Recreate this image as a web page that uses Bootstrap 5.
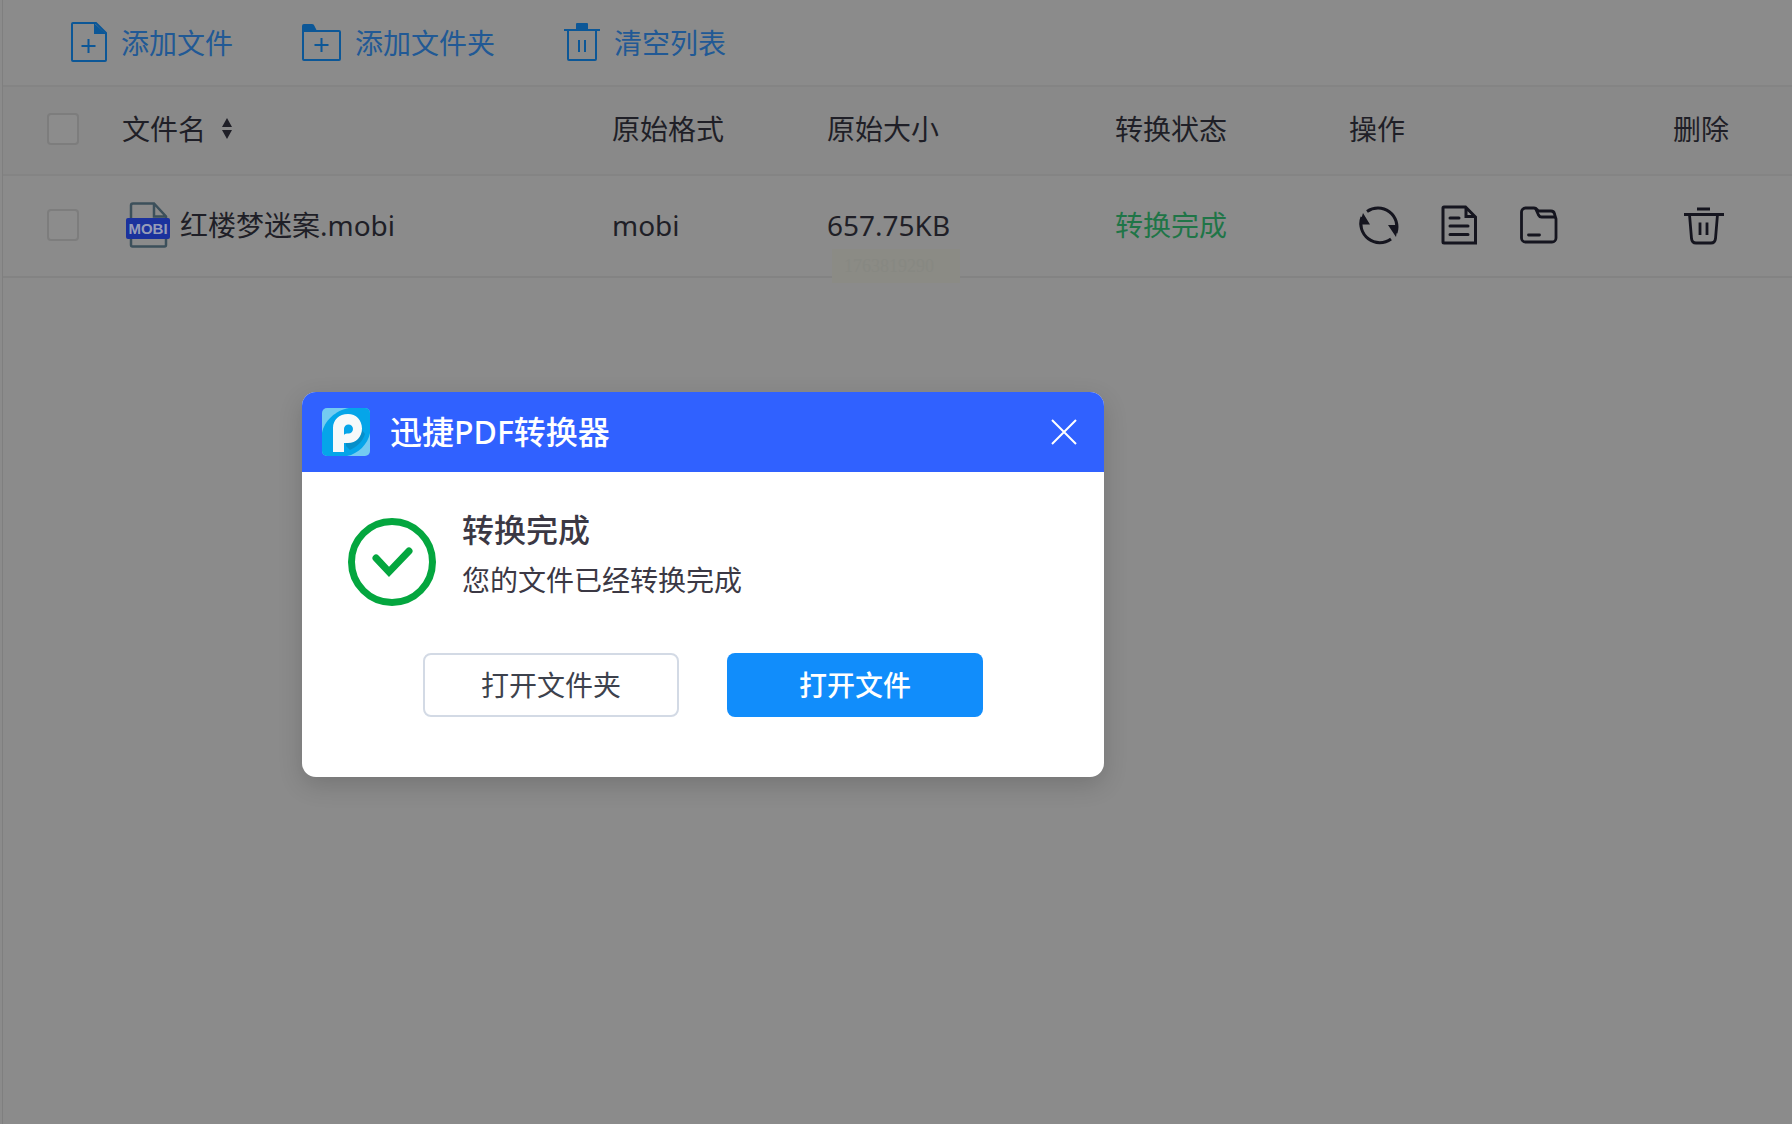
<!DOCTYPE html>
<html lang="zh-CN">
<head>
<meta charset="utf-8">
<meta name="viewport" content="width=device-width, initial-scale=1">
<title>迅捷PDF转换器</title>
<link href="https://cdn.jsdelivr.net/npm/bootstrap@5.3.0/dist/css/bootstrap.min.css" rel="stylesheet">
<style>
  body { background: #8b8b8b; color: #1f1f27; font-family: "Noto Sans", "Noto Sans CJK SC", sans-serif; font-size: 28px; line-height: 40px; }
  .workspace { margin-left: 2px; border-left: 1px solid #7f7f7f; }
  .toolbar { height: 87px; padding-left: 68px; column-gap: 69px; border-bottom: 2px solid #848484; }
  .plain { padding: 0; border: 0; background: none; color: #15151f; line-height: 0; }
  .tool { gap: 14px; color: #215995; }
  .tool svg { color: #0c5797; }
  .file-table { table-layout: fixed; width: 100%; }
  .file-table th { height: 88px; background: #898989; font-weight: 400; border-bottom: 2px solid #848484; }
  .file-table td { height: 102px; border-bottom: 2px solid #838383; }
  .file-table th, .file-table td { padding: 0 0 3px; vertical-align: middle; white-space: nowrap; }
  .file-table .form-check-input { display: block; width: 32px; height: 32px; margin: 0 0 0 44px; background-color: #8c8c8c; border: 2px solid #7d7d7d; border-radius: 4px; }
  .c-check, .c-del { width: 119px; }
  .c-format { width: 215px; }
  .c-size { width: 288px; }
  .c-status { width: 234px; }
  .c-ops { width: 324px; }
  .done { color: #1f7547; }
  .ops { gap: 38px; padding-left: 9px; }
  .size-tip { left: 5px; top: 73px; width: 128px; height: 34px; padding-left: 12px; background: #8b8b85; color: #878882; font-family: "Liberation Serif", serif; font-size: 18px; line-height: 34px; }
  .dialog { left: 302px; top: 392px; width: 802px; border-radius: 14px; background: #fff; color: #3b3844; box-shadow: 0 8px 24px rgba(0,0,0,.16); }
  .dialog-head { height: 80px; padding: 0 26px 0 20px; gap: 20px; background: #3061ff; color: #fff; font-size: 32px; font-weight: 500; }
  .dialog-body { padding: 36px 46px 60px; }
  .dialog-title { font-size: 32px; line-height: 44px; font-weight: 500; margin: 0 0 8px; }
  .dialog .btn { width: 256px; height: 64px; padding: 0; font-size: 28px; border-radius: 8px; }
  .btn-line { border: 2px solid #d3dae5; color: #3d424d; background: #fff; }
  .btn-fill, .btn-fill:hover { border: 0; background: #118dfb; color: #fff; font-weight: 500; }
  .btn-row { gap: 48px; margin-top: 47px; }
  .msg { gap: 24px; }
</style>
<script src="https://cdn.jsdelivr.net/npm/bootstrap@5.3.0/dist/js/bootstrap.bundle.min.js"></script>
</head>
<body>
<main class="workspace min-vh-100">
  <nav class="toolbar d-flex align-items-center" aria-label="文件操作">
    <button type="button" class="tool plain d-flex align-items-center">
      <svg width="36" height="42" viewBox="0 0 36 42" fill="none" stroke="currentColor" stroke-width="2"><path d="M2 1h23l10 10v27a1 1 0 0 1-1 1H2a1 1 0 0 1-1-1V2a1 1 0 0 1 1-1zM17.500 17v14M10.500 24h14"/><path d="M23 1l12 11H23z" fill="currentColor" stroke="none"/></svg>
      <span>添加文件</span>
    </button>
    <button type="button" class="tool plain d-flex align-items-center">
      <svg width="39" height="40" viewBox="0 0 39 40" fill="none" stroke="currentColor" stroke-width="2"><path d="M1 8h36a1 1 0 0 1 1 1v27a1 1 0 0 1-1 1H2a1 1 0 0 1-1-1zM19.500 15v14M12.500 22h14"/><path d="M0 3a2 2 0 0 1 2-2h8q2 0 2.500 2l2.500 5H0z" fill="currentColor" stroke="none"/></svg>
      <span>添加文件夹</span>
    </button>
    <button type="button" class="tool plain d-flex align-items-center">
      <svg width="36" height="40" viewBox="0 0 36 40" fill="none" stroke="currentColor" stroke-width="2"><path d="M0 7h36M4 7v29a1 1 0 0 0 1 1h26a1 1 0 0 0 1-1V7M15 17v12M21 17v12"/><path d="M12 7V1a1 1 0 0 1 1-1h10a1 1 0 0 1 1 1v6z" fill="currentColor" stroke="none"/></svg>
      <span>清空列表</span>
    </button>
  </nav>
  <table class="file-table">
    <thead>
      <tr>
        <th class="c-check"><input class="form-check-input" type="checkbox" aria-label="全选"></th>
        <th><span class="d-flex align-items-center gap-3">文件名
          <svg width="10" height="22" viewBox="0 0 10 22" fill="currentColor"><path d="M5 0l5 9H0zM0 12h10l-5 9z"/></svg></span></th>
        <th class="c-format">原始格式</th>
        <th class="c-size">原始大小</th>
        <th class="c-status">转换状态</th>
        <th class="c-ops">操作</th>
        <th class="c-del">删除</th>
      </tr>
    </thead>
    <tbody>
      <tr>
        <td><input class="form-check-input" type="checkbox" aria-label="选择 红楼梦迷案.mobi"></td>
        <td><span class="d-flex align-items-center">
          <svg class="ms-1 me-2" width="46" height="46" viewBox="1 0 46 46"><path d="M8 1.500h21l12 13V43a1.500 1.500 0 0 1-1.500 1.500h-32A1.500 1.500 0 0 1 6 43V3.500a2 2 0 0 1 2-2zM29 1.500v13h12" fill="none" stroke="#3c505b" stroke-width="2.500"/><rect x="1" y="16" width="44" height="21" rx="2" fill="#1b329d"/><text x="23" y="32" text-anchor="middle" font-family="Liberation Sans, sans-serif" font-weight="700" font-size="15" fill="#979db8">MOBI</text></svg>
          红楼梦迷案.mobi</span></td>
        <td>mobi</td>
        <td class="position-relative">657.75KB<span class="size-tip position-absolute">1763819290</span></td>
        <td class="done">转换完成</td>
        <td><div class="ops d-flex align-items-center">
          <button type="button" class="plain" aria-label="重新转换"><svg width="42" height="42" viewBox="0 0 42 42" fill="none" stroke="currentColor" stroke-width="3"><path d="M9 7.500A19 19 0 0 1 38 29"/><path d="M33 35A19 19 0 0 1 4 13"/><path d="M30 21h10l-2 12zM12 20.500H1.500L5 9z" fill="currentColor" stroke="none"/></svg></button>
          <button type="button" class="plain" aria-label="打开文件"><svg width="42" height="42" viewBox="0 0 42 42" fill="none" stroke="currentColor" stroke-width="3"><path d="M6 3h21.500l10 10v26H6a1 1 0 0 1-1-1V4a1 1 0 0 1 1-1zM28 3v9.500h9"/><path d="M12 14h9M12 22h18M12 30.500h18" stroke-linecap="round"/></svg></button>
          <button type="button" class="plain" aria-label="打开文件夹"><svg width="42" height="42" viewBox="0 0 42 42" fill="none" stroke="currentColor" stroke-width="2.800"><path d="M3.500 8a4 4 0 0 1 4-4h8.500q2 0 3 1.500l1.500 1.500H33q3 0 3.500 3l1.500 5v19a4 4 0 0 1-4 4H7.500a4 4 0 0 1-4-4z"/><path d="M17.500 4.500l3 6.500q1 2 3 2h13.500"/><path d="M10.500 31h11" stroke-linecap="round"/></svg></button>
        </div></td>
        <td><button type="button" class="plain ms-2" aria-label="删除"><svg width="46" height="42" viewBox="0 0 46 42" fill="none" stroke="currentColor" stroke-width="2.800"><path d="M16 4h13M3 9.500h40M8.500 9.500l2 24q.500 4.500 4.500 4.500h15q4 0 4.500-4.500l2-24M19 17.500v12.500M26 17.500v12.500"/></svg></button></td>
      </tr>
    </tbody>
  </table>
</main>

<section class="dialog position-absolute overflow-hidden" role="dialog" aria-labelledby="dlg-name">
  <header class="dialog-head d-flex align-items-center">
    <svg width="48" height="48" viewBox="0 0 48 48"><defs><clipPath id="tile"><rect width="48" height="48" rx="5"/></clipPath></defs><g clip-path="url(#tile)"><rect width="48" height="48" fill="#74cbf1"/><path d="M0 25C2 13 14 2 27 0h21v25C46 36 36 46 25 48H0z" fill="#05a5e9"/><path d="M24 35c10 0 15-7 16-13l3 4c-3 9-9 13-15 16l-4-4z" fill="#078fc9"/><path d="M11 44V20C11 12 17 6 26 6c8 0 14 6 14 14.500S34 35 26 35h-4v9z" fill="#f7f9fa"/><path d="M22 27v-6a4.500 4.500 0 1 1 4.500 4.500c-2 0-4 0-4.500 1.500z" fill="#05a5e9"/></g></svg>
    <span id="dlg-name" class="flex-grow-1">迅捷PDF转换器</span>
    <button type="button" class="plain text-white" aria-label="关闭"><svg width="28" height="28" viewBox="0 0 28 28" fill="none" stroke="currentColor" stroke-width="2"><path d="M2 2l24 24M26 2L2 26"/></svg></button>
  </header>
  <div class="dialog-body">
    <div class="msg d-flex align-items-start">
      <svg class="mt-2" width="90" height="90" viewBox="0 0 90 90" fill="none" stroke="#04a63f" stroke-width="7"><circle cx="44" cy="46" r="40.500"/><path d="M28 42l13 14 20-21" stroke-linecap="round" stroke-linejoin="miter"/></svg>
      <div>
        <h1 class="dialog-title">转换完成</h1>
        <p class="m-0">您的文件已经转换完成</p>
      </div>
    </div>
    <div class="btn-row d-flex justify-content-center">
      <button type="button" class="btn btn-line">打开文件夹</button>
      <button type="button" class="btn btn-fill">打开文件</button>
    </div>
  </div>
</section>
</body>
</html>
